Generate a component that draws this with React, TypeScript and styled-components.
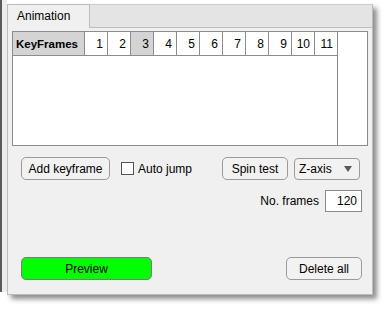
import React from "react";
import styled, { createGlobalStyle } from "styled-components";

const GlobalStyle = createGlobalStyle`
  html, body {
    margin: 0;
    padding: 0;
    background: #ffffff;
  }
  body {
    font-family: "Liberation Sans", Arial, sans-serif;
    font-size: 12px;
    color: #000;
  }
`;

const frames = [1, 2, 3, 4, 5, 6, 7, 8, 9, 10, 11];
const activeFrame = 3;

const Stage = styled.div`
  display: flex;
  align-items: flex-start;
  width: 386px;
  height: 309px;
`;

const LeftEdge = styled.div`
  box-sizing: border-box;
  width: 7px;
  height: 292px;
  background: #ededed;
  border-left: 2px solid #5a5a5a;
`;

const Panel = styled.div`
  box-sizing: border-box;
  margin-top: 4px;
  width: 366px;
  height: 291px;
  display: flex;
  flex-direction: column;
  box-shadow: 4px 4px 5px rgba(0, 0, 0, 0.45);
`;

const TabStrip = styled.div`
  box-sizing: border-box;
  display: flex;
  height: 23px;
  background: #e4e4e4;
  border-top: 1px solid #cfcfcf;
  border-right: 1px solid #bcbcbc;
`;

const Tab = styled.div`
  box-sizing: border-box;
  position: relative;
  z-index: 1;
  width: 83px;
  height: 24px;
  margin-top: -1px;
  padding: 4px 0 0 9px;
  background: #f0f0f0;
  border: 1px solid #bcbcbc;
  border-bottom: none;
  font-size: 12px;
`;

const Content = styled.div`
  box-sizing: border-box;
  flex: 1;
  display: flex;
  flex-direction: column;
  padding: 3px 0 14px 4px;
  background: #f0f0f0;
  border: 1px solid #bcbcbc;
`;

const Table = styled.div`
  box-sizing: border-box;
  display: flex;
  width: 356px;
  height: 115px;
  background: #fff;
  border: 1px solid #8c8c8c;
`;

const DataArea = styled.div`
  box-sizing: border-box;
  width: 325px;
  border-right: 1px solid #8c8c8c;
`;

const HeaderRow = styled.div`
  box-sizing: border-box;
  display: flex;
  height: 24px;
  border-bottom: 1px solid #8c8c8c;
`;

const HeadCell = styled.div<{ $active?: boolean }>`
  box-sizing: border-box;
  display: flex;
  align-items: center;
  justify-content: flex-end;
  width: 23px;
  padding-right: 4px;
  background: ${(p) => (p.$active ? "#d4d4d4" : "#ffffff")};
  border-right: 1px solid #8c8c8c;
  font-size: 12px;
  &:last-child {
    border-right: none;
    width: 22px;
  }
`;

const KeyCell = styled.div`
  box-sizing: border-box;
  display: flex;
  align-items: center;
  width: 72px;
  padding-left: 3px;
  background: #d4d4d4;
  border-right: 1px solid #8c8c8c;
  font-size: 11.5px;
  font-weight: bold;
`;

const Filler = styled.div`
  flex: 1;
`;

const ControlsRow = styled.div`
  display: flex;
  align-items: center;
  margin-top: 11px;
  padding: 0 12px 0 9px;
`;

const Button = styled.button<{ $w: number; $green?: boolean }>`
  box-sizing: border-box;
  width: ${(p) => p.$w}px;
  height: 23px;
  padding: 0;
  font-family: "Liberation Sans", Arial, sans-serif;
  font-size: 12px;
  color: #000;
  background: ${(p) => (p.$green ? "#00ff00" : "#f2f2f2")};
  border: 1px solid ${(p) => (p.$green ? "#7a7a7a" : "#9a9a9a")};
  border-radius: 5px;
`;

const CheckLabel = styled.label`
  display: flex;
  align-items: center;
  gap: 4px;
  margin-left: 11px;
  font-size: 12px;
`;

const Box = styled.span`
  box-sizing: border-box;
  width: 13px;
  height: 13px;
  background: #fff;
  border: 1px solid #555;
`;

const Spacer = styled.div`
  flex: 1;
`;

const Select = styled.div`
  box-sizing: border-box;
  display: flex;
  align-items: center;
  justify-content: space-between;
  width: 66px;
  height: 22px;
  margin-left: 6px;
  padding: 0 7px 0 4px;
  background: #f2f2f2;
  border: 1px solid #9a9a9a;
  border-radius: 4px;
  font-size: 12px;
`;

const Caret = styled.span`
  width: 0;
  height: 0;
  border-left: 4px solid transparent;
  border-right: 4px solid transparent;
  border-top: 6px solid #5a5a5a;
`;

const FramesRow = styled.div`
  display: flex;
  align-items: center;
  justify-content: flex-end;
  margin-top: 10px;
  padding-right: 10px;
  font-size: 12px;
`;

const NumInput = styled.div`
  box-sizing: border-box;
  width: 37px;
  height: 22px;
  margin-left: 6px;
  padding: 3px 4px 0 0;
  text-align: right;
  background: #fff;
  border: 1px solid #8a8a8a;
`;

const BottomRow = styled.div`
  display: flex;
  align-items: center;
  justify-content: space-between;
  margin-top: auto;
  padding: 0 10px 0 9px;
`;

export default function App() {
  return (
    <>
      <GlobalStyle />
      <Stage>
        <LeftEdge />
        <Panel>
          <TabStrip>
            <Tab>Animation</Tab>
          </TabStrip>
          <Content>
            <Table>
              <DataArea>
                <HeaderRow>
                  <KeyCell>KeyFrames</KeyCell>
                  {frames.map((f) => (
                    <HeadCell key={f} $active={f === activeFrame}>
                      {f}
                    </HeadCell>
                  ))}
                </HeaderRow>
              </DataArea>
              <Filler />
            </Table>
            <ControlsRow>
              <Button $w={89}>Add keyframe</Button>
              <CheckLabel>
                <Box />
                Auto jump
              </CheckLabel>
              <Spacer />
              <Button $w={66}>Spin test</Button>
              <Select>
                Z-axis
                <Caret />
              </Select>
            </ControlsRow>
            <FramesRow>
              No. frames
              <NumInput>120</NumInput>
            </FramesRow>
            <BottomRow>
              <Button $w={131} $green>
                Preview
              </Button>
              <Button $w={76}>Delete all</Button>
            </BottomRow>
          </Content>
        </Panel>
      </Stage>
    </>
  );
}
